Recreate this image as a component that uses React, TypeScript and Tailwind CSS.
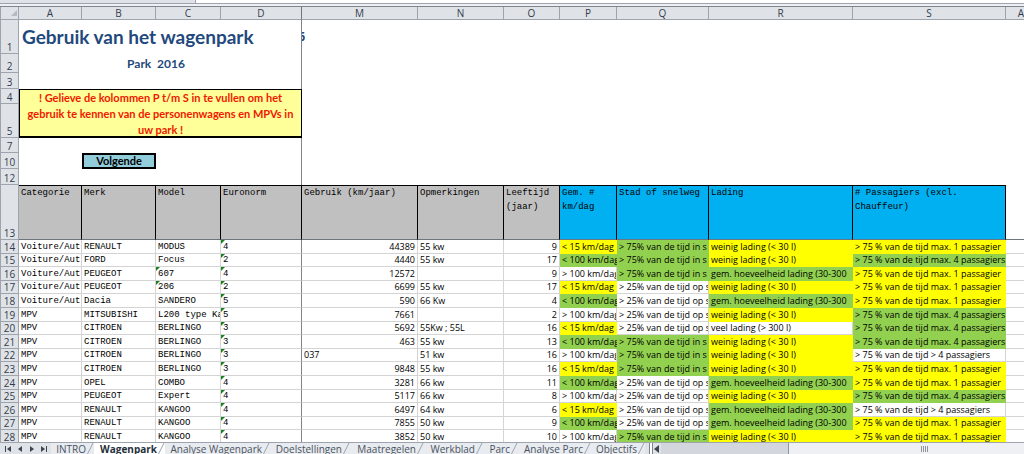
import { clsx } from "clsx";

type Fill = "y" | "g" | "w";

const FILL: Record<Fill, string> = {
  y: "bg-[#ffff00] border-[#ffff00]",
  g: "bg-[#92d050] border-[#92d050]",
  w: "bg-white border-r border-[#d4d4d4]",
};

const COLUMNS = [
  { id: "A", width: "w-[63px]" },
  { id: "B", width: "w-[74px]" },
  { id: "C", width: "w-[65px]" },
  { id: "D", width: "w-[81px]" },
  { id: "M", width: "w-[116px]" },
  { id: "N", width: "w-[86px]" },
  { id: "O", width: "w-[56px]" },
  { id: "P", width: "w-[57px]" },
  { id: "Q", width: "w-[92px]" },
  { id: "R", width: "w-[144px]" },
  { id: "S", width: "w-[153px]" },
];

const HEADINGS = [
  "Categorie",
  "Merk",
  "Model",
  "Euronorm",
  "Gebruik (km/jaar)",
  "Opmerkingen",
  "Leeftijd (jaar)",
  "Gem. # km/dag",
  "Stad of snelweg",
  "Lading",
  "# Passagiers (excl. Chauffeur)",
];

const DISTANCE: Record<Fill, string> = {
  y: "< 15 km/dag",
  g: "< 100 km/dag",
  w: "> 100 km/dag",
};

const ROAD: Record<Fill, string> = {
  y: "",
  g: "> 75% van de tijd in s",
  w: "> 25% van de tijd op s",
};

const LOAD: Record<Fill, string> = {
  y: "weinig lading (< 30 l)",
  g: "gem. hoeveelheid lading (30-300",
  w: "veel lading (> 300 l)",
};

const PASSENGERS: Record<Fill, string> = {
  y: "> 75 % van de tijd max. 1 passagier",
  g: "> 75 % van de tijd max. 4 passagiers",
  w: "> 75 % van de tijd > 4 passagiers",
};

type Vehicle = [string, string, string, string, string, string, string, Fill, Fill, Fill, Fill];

const VEHICLES: Vehicle[] = [
  ["Voiture/Aut", "RENAULT", "MODUS", "4", "44389", "55 kw", "9", "y", "g", "y", "y"],
  ["Voiture/Aut", "FORD", "Focus", "2", "4440", "55 kw", "17", "g", "g", "y", "g"],
  ["Voiture/Aut", "PEUGEOT", "607", "4", "12572", "", "9", "w", "g", "g", "y"],
  ["Voiture/Aut", "PEUGEOT", "206", "2", "6699", "55 kw", "17", "y", "w", "y", "y"],
  ["Voiture/Aut", "Dacia", "SANDERO", "5", "590", "66 Kw", "4", "g", "w", "g", "y"],
  ["MPV", "MITSUBISHI", "L200 type Ka", "5", "7661", "", "2", "w", "w", "y", "g"],
  ["MPV", "CITROEN", "BERLINGO", "3", "5692", "55Kw ; 55L", "16", "y", "w", "w", "g"],
  ["MPV", "CITROEN", "BERLINGO", "3", "463", "55 kw", "13", "g", "g", "y", "g"],
  ["MPV", "CITROEN", "BERLINGO", "3", "037", "51 kw", "16", "w", "g", "y", "w"],
  ["MPV", "CITROEN", "BERLINGO", "3", "9848", "55 kw", "16", "y", "g", "y", "y"],
  ["MPV", "OPEL", "COMBO", "4", "3281", "66 kw", "11", "g", "w", "g", "y"],
  ["MPV", "PEUGEOT", "Expert", "4", "5117", "66 kw", "8", "w", "w", "y", "g"],
  ["MPV", "RENAULT", "KANGOO", "4", "6497", "64 kw", "6", "y", "w", "g", "w"],
  ["MPV", "RENAULT", "KANGOO", "4", "7855", "50 kw", "9", "g", "w", "g", "y"],
  ["MPV", "RENAULT", "KANGOO", "4", "3852", "50 kw", "10", "w", "g", "y", "y"],
];

const TABS = [
  { name: "INTRO", width: "w-[43px]" },
  { name: "Wagenpark", width: "w-[71px]" },
  { name: "Analyse Wagenpark", width: "w-[105px]" },
  { name: "Doelstellingen", width: "w-[80px]" },
  { name: "Maatregelen", width: "w-[74px]" },
  { name: "Werkblad", width: "w-[59px]" },
  { name: "Parc", width: "w-[35px]" },
  { name: "Analyse Parc", width: "w-[73px]" },
  { name: "Objectifs", width: "w-[54px]" },
];

const NAV = [
  { label: "Eerste blad", path: "M1 1h1v6H1zM7 1v6L3 4z" },
  { label: "Vorig blad", path: "M6 1v6L2 4z" },
  { label: "Volgend blad", path: "M2 1v6l4-3z" },
  { label: "Laatste blad", path: "M1 1v6l4-3zM6 1h1v6H6z" },
];

function RowNumber({ n }: { n: number }) {
  return (
    <th
      scope="row"
      className="overflow-hidden border-r border-b border-l border-[#9da4ad] bg-[#dfe3e8] p-0 text-center align-bottom text-[10px] leading-3 font-normal text-[#333c48]"
    >
      {n}
    </th>
  );
}

function Flag() {
  return (
    <span className="absolute top-0 left-0 size-0 border-t-4 border-r-4 border-t-[#17801f] border-r-transparent" />
  );
}

function VehicleRow({ vehicle, index }: { vehicle: Vehicle; index: number }) {
  const [category, brand, model, norm, usage, note, age, km, road, load, seats] = vehicle;
  const line = "border-b p-0 px-0.5 whitespace-nowrap";
  const cell = clsx(line, "overflow-hidden border-r border-[#d4d4d4]");
  const mono = clsx(cell, "font-['Liberation_Mono',monospace]");
  return (
    <tr className={index % 5 === 1 || index % 5 === 3 ? "h-[13px]" : "h-[14px]"}>
      <RowNumber n={14 + index} />
      <td className={mono}>{category}</td>
      <td className={mono}>{brand}</td>
      <td className={clsx(mono, "relative")}>
        {/^\d+$/.test(model) && <Flag />}
        {model}
      </td>
      <td className={clsx(mono, "relative border-r-[#7f858c]")}>
        <Flag />
        {norm}
      </td>
      <td className={clsx(cell, usage.startsWith("0") ? "text-left" : "text-right")}>{usage}</td>
      <td className={cell}>{note}</td>
      <td className={clsx(cell, "text-right")}>{age}</td>
      <td className={clsx(line, "overflow-hidden", FILL[km])}>{DISTANCE[km]}</td>
      <td className={clsx(line, "overflow-hidden", FILL[road])}>{ROAD[road]}</td>
      <td className={clsx(line, "overflow-hidden", FILL[load])}>{LOAD[load]}</td>
      <td className={clsx(line, FILL[seats])}>{PASSENGERS[seats]}</td>
      <td className={clsx(line, "border-[#d4d4d4]")} />
    </tr>
  );
}

function Sheet() {
  return (
    <table className="w-full table-fixed border-separate border-spacing-0 text-[9px] leading-3 text-black">
      <colgroup>
        <col className="w-[19px]" />
        {COLUMNS.map((c) => (
          <col key={c.id} className={c.width} />
        ))}
        <col />
      </colgroup>
      <thead>
        <tr className="h-[13px] bg-[#dfe3e8] text-[10px] text-[#333c48]">
          <th className="border-r border-b border-l border-[#9da4ad] p-0">
            <svg viewBox="0 0 8 8" className="ml-auto size-2">
              <path d="M7 1v6H1z" fill="#b4bac3" />
            </svg>
          </th>
          {COLUMNS.map((c) => (
            <th
              key={c.id}
              scope="col"
              className={clsx(
                "border-r border-b border-[#9da4ad] p-0 font-normal",
                c.id === "D" && "border-r-[#6f757c]",
              )}
            >
              {c.id}
            </th>
          ))}
          <th className="overflow-hidden border-b border-[#9da4ad] p-0 text-right font-normal">A</th>
        </tr>
      </thead>
      <tbody>
        <tr className="h-[34px]">
          <RowNumber n={1} />
          <td
            colSpan={4}
            className="border-r border-[#7f858c] p-0 pl-[3px] font-[Lato,sans-serif] text-[19px] leading-8 font-bold text-[#1f497d]"
          >
            <h1>Gebruik van het wagenpark</h1>
          </td>
          <td colSpan={8} className="p-0 text-xs font-bold text-[#1f497d]">
            <span className="flex w-[3px] justify-end overflow-hidden">6</span>
          </td>
        </tr>
        <tr className="h-[19px]">
          <RowNumber n={2} />
          <td
            colSpan={4}
            className="border-r border-[#7f858c] p-0 pr-2 text-center font-[Lato,sans-serif] text-xs leading-4 font-bold whitespace-pre text-[#1f497d]"
          >
            {"Park  2016"}
          </td>
          <td colSpan={8} />
        </tr>
        <tr className="h-4">
          <RowNumber n={3} />
          <td colSpan={4} className="border-r border-[#7f858c] p-0" />
          <td colSpan={8} className="p-0" />
        </tr>
        <tr className="h-[15px]">
          <RowNumber n={4} />
          <td colSpan={4} rowSpan={2} className="p-0">
            <div className="h-[49px] border border-b-2 border-black bg-[#ffff99] px-1 text-center font-[Lato,sans-serif] text-[11px] leading-4 font-bold text-[#f01800]">
              ! Gelieve de kolommen P t/m S in te vullen om het
              <br />
              gebruik te kennen van de personenwagens en MPVs in
              <br />
              uw park !
            </div>
          </td>
          <td colSpan={8} className="p-0" />
        </tr>
        <tr className="h-[34px]">
          <RowNumber n={5} />
          <td colSpan={8} className="p-0" />
        </tr>
        <tr className="h-[15px]">
          <RowNumber n={7} />
          <td colSpan={4} className="border-r border-[#7f858c] p-0" />
          <td colSpan={8} className="p-0" />
        </tr>
        <tr className="h-4">
          <RowNumber n={10} />
          <td className="p-0" />
          <td className="p-0">
            <button
              type="button"
              className="block h-4 w-full border-2 border-black bg-[#92cddc] text-center font-[Lato,sans-serif] text-[11px] leading-3 font-bold text-black"
            >
              Volgende
            </button>
          </td>
          <td colSpan={2} className="border-r border-[#7f858c] p-0" />
          <td colSpan={8} className="p-0" />
        </tr>
        <tr className="h-4">
          <RowNumber n={12} />
          <td colSpan={4} className="border-r border-[#7f858c] p-0" />
          <td colSpan={8} className="p-0" />
        </tr>
        <tr className="h-[55px]">
          <RowNumber n={13} />
          {HEADINGS.map((h, i) => (
            <th
              key={h}
              scope="col"
              className={clsx(
                "border-t border-r border-b border-black border-b-[#6f757c] p-0 pl-0.5 text-left align-top font-['Liberation_Mono',monospace] leading-[14px] font-normal",
                i < 7 ? "bg-[#c0c0c0]" : "bg-[#00b0f0]",
              )}
            >
              {h}
            </th>
          ))}
          <td className="border-b border-b-[#6f757c] p-0" />
        </tr>
        {VEHICLES.map((v, i) => (
          <VehicleRow key={i} vehicle={v} index={i} />
        ))}
      </tbody>
    </table>
  );
}

function SheetTabs() {
  return (
    <footer className="flex h-3 shrink-0 items-center overflow-hidden border-t border-[#9da4ad] bg-[#dfe3e8] text-[10px] leading-3 text-[#4a535f]">
      <nav className="flex w-[51px] shrink-0 items-center gap-1 pl-1">
        {NAV.map((n) => (
          <button key={n.label} type="button" aria-label={n.label} className="block size-2">
            <svg viewBox="0 0 8 8" className="size-2 fill-[#3c4652]">
              <path d={n.path} />
            </svg>
          </button>
        ))}
      </nav>
      {TABS.map((t) => {
        const active = t.name === "Wagenpark";
        return (
          <button
            key={t.name}
            type="button"
            className={clsx(
              "flex h-3 shrink-0 items-center justify-end pl-2 whitespace-nowrap",
              t.width,
              active ? "bg-white font-bold text-[#26303c]" : "bg-[#e8ebef]",
            )}
          >
            <span className="flex flex-1 justify-center">{t.name}</span>
            <svg viewBox="0 0 8 12" className="h-3 w-2 shrink-0" fill="none" stroke="#9da4ad">
              <path d="M1 12 7 0" />
            </svg>
          </button>
        );
      })}
      <span className="ml-1 h-3 w-1 shrink-0 border-x border-[#7f858c] bg-white" />
      <button type="button" aria-label="Naar links schuiven" className="shrink-0">
        <svg viewBox="0 0 8 8" className="size-2 fill-[#3c4652]">
          <path d="M6 0v8L1 4z" />
        </svg>
      </button>
      <div className="flex h-3 flex-1 justify-end bg-[#d3d7dd]">
        <div className="flex w-[65%] items-center justify-center border-l border-[#8f959d] bg-[#eef0f3] pl-9">
          <svg viewBox="0 0 7 6" className="h-1.5 w-[7px]" stroke="#8f959d">
            <path d="M.5 0v6M2.5 0v6M4.5 0v6M6.5 0v6" />
          </svg>
        </div>
      </div>
    </footer>
  );
}

export default function App() {
  return (
    <div className="flex h-screen flex-col overflow-hidden bg-white font-['Open_Sans',sans-serif]">
      <div className="flex h-1 shrink-0 border-b border-[#9da4ad]">
        <div className="w-[196px] border-r border-[#9da4ad] bg-[#dfe3e8]" />
      </div>
      <div className="h-[3px] shrink-0 border-b border-[#7f858c] bg-[#eef0f3]" />
      <main className="min-h-0 flex-1 overflow-hidden">
        <Sheet />
      </main>
      <SheetTabs />
    </div>
  );
}
